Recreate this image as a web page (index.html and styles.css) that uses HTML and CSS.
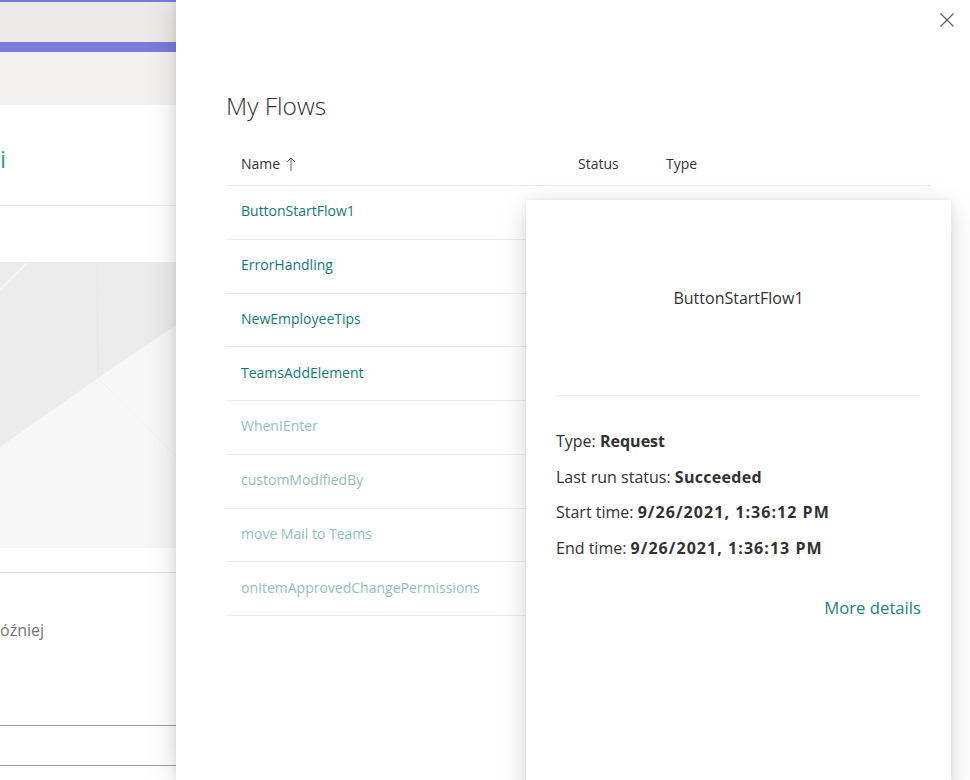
FILE: index.html
```html
<!DOCTYPE html>
<html lang="en">
<head>
<meta charset="utf-8">
<title>My Flows</title>
<link rel="stylesheet" href="styles.css">
</head>
<body>
<div class="page">
  <div class="suite-line"></div>
  <div class="suite-bar"></div>
  <div class="accent-bar"></div>
  <div class="nav-bar"></div>
  <div class="site-head"><span class="site-title">i</span></div>
  <div class="band"></div>
  <div class="hero">
    <svg class="hero-art" width="970" height="286" viewBox="0 0 970 286" preserveAspectRatio="none">
      <rect x="0" y="0" width="970" height="286" fill="#f7f7f7"/>
      <polygon points="0,0 176,0 176,63 98,116 0,185" fill="#ececec"/>
      <line x1="97" y1="0" x2="98" y2="116" stroke="#e6e6e6" stroke-width="1"/>
      <line x1="98" y1="116" x2="176" y2="195" stroke="#f0f0f0" stroke-width="1"/>
      <line x1="0" y1="28" x2="28" y2="0" stroke="#f4f4f4" stroke-width="2"/>
    </svg>
  </div>
  <div class="hero-gap"></div>
  <div class="notice"><p class="notice-text">óźniej</p></div>
  <div class="field"></div>
  <div class="field"></div>
</div>

<aside class="panel">
  <div class="panel-top">
    <button class="close" aria-label="Close">
      <svg width="14" height="14" viewBox="0 0 14 14"><path d="M0.5 0.5 L13.5 13.5 M13.5 0.5 L0.5 13.5" stroke="#605e5c" stroke-width="1.2" fill="none"/></svg>
    </button>
  </div>
  <h1 class="panel-title">My Flows</h1>
  <div class="flows">
    <div class="flows-head">
      <div class="col-name">Name
        <svg class="sort" width="10" height="14" viewBox="0 0 10 14"><path d="M5 1 V14 M1 5 L5 1 L9 5" stroke="#605e5c" stroke-width="1" fill="none"/></svg>
      </div>
      <div class="col-status">Status</div>
      <div class="col-type">Type</div>
    </div>
    <div class="flow-row"><span class="flow-name">ButtonStartFlow1</span></div>
    <div class="flow-row"><span class="flow-name">ErrorHandling</span></div>
    <div class="flow-row"><span class="flow-name">NewEmployeeTips</span></div>
    <div class="flow-row"><span class="flow-name">TeamsAddElement</span></div>
    <div class="flow-row"><span class="flow-name muted">WhenIEnter</span></div>
    <div class="flow-row"><span class="flow-name muted">customModifiedBy</span></div>
    <div class="flow-row"><span class="flow-name muted">move Mail to Teams</span></div>
    <div class="flow-row"><span class="flow-name muted">onItemApprovedChangePermissions</span></div>
  </div>

  <div class="callout">
    <div class="callout-head">ButtonStartFlow1</div>
    <div class="callout-divider"></div>
    <div class="callout-body">
      <p class="detail">Type: <b>Request</b></p>
      <p class="detail">Last run status: <b class="wide">Succeeded</b></p>
      <p class="detail">Start time: <b class="date">9/26/2021, 1:36:12 PM</b></p>
      <p class="detail">End time: <b class="date">9/26/2021, 1:36:13 PM</b></p>
      <div class="more"><a class="more-link">More details</a></div>
    </div>
  </div>
</aside>
</body>
</html>
```

FILE: styles.css
```css
* { box-sizing: border-box; }

html, body {
  margin: 0;
  padding: 0;
}

body {
  width: 970px;
  height: 780px;
  overflow: hidden;
  position: relative;
  background: #fff;
  font-family: "Open Sans", "Noto Sans", sans-serif;
  color: #323130;
}

/* background SharePoint page */
.page {
  width: 970px;
}

.suite-line { height: 2px; background: #7b79dc; }
.suite-bar { height: 40px; background: #ebeae9; }
.accent-bar { height: 10px; background: #7b7bdb; }
.nav-bar { height: 53px; background: #f3f2f1; }

.site-head {
  height: 101px;
  display: flex;
  align-items: center;
  padding-top: 6px;
  border-bottom: 1px solid #edebe9;
}

.site-title {
  margin-left: 0;
  font-size: 24px;
  color: #2a9aa0;
}

.band { height: 56px; }

.hero { height: 286px; }
.hero-art { display: block; }

.hero-gap {
  height: 25px;
  border-bottom: 1px solid #e1dfdd;
}

.notice {
  height: 153px;
  border-bottom: 1px solid #a19f9d;
  padding-top: 46px;
}

.notice-text {
  margin: 0;
  font-size: 16px;
  color: #77736f;
}

.field {
  height: 40px;
  border-bottom: 1px solid #a19f9d;
}

/* side panel */
.panel {
  position: absolute;
  top: 0;
  left: 176px;
  right: 0;
  bottom: 0;
  background: #fff;
  padding: 0 39px 0 50px;
  box-shadow: 0 0 30px rgba(0, 0, 0, 0.16), 0 0 8px rgba(0, 0, 0, 0.08);
}

.panel-top {
  display: flex;
  justify-content: flex-end;
  padding-top: 4px;
  margin-right: -32px;
}

.close {
  width: 32px;
  height: 32px;
  border: 0;
  background: transparent;
  padding: 0;
  display: flex;
  align-items: center;
  justify-content: center;
}

.panel-title {
  margin: 54px 0 0 0;
  font-size: 24.5px;
  line-height: 32px;
  font-weight: 300;
  color: #323130;
}

.flows { margin-top: 21px; }

.flows-head {
  display: grid;
  grid-template-columns: 352px 88px 1fr;
  align-items: center;
  height: 43px;
  padding-bottom: 2px;
  border-bottom: 1px solid #edebe9;
  font-size: 14px;
  color: #323130;
}

.col-name {
  padding-left: 15px;
  display: flex;
  align-items: center;
  gap: 6px;
}

.sort { margin-top: 1px; }

.flow-row {
  height: 53.75px;
  display: flex;
  align-items: center;
  padding-left: 15px;
  padding-bottom: 3px;
  border-bottom: 1px solid #edebe9;
  font-size: 14px;
}

.flow-name { color: #0f7a7c; }
.flow-name.muted { color: #8fbfbf; }

/* callout card */
.callout {
  position: absolute;
  left: 350px;
  top: 200px;
  width: 425px;
  bottom: -20px;
  background: #fff;
  box-shadow: 0 6px 26px rgba(0, 0, 0, 0.16), 0 0 6px rgba(0, 0, 0, 0.06);
}

.callout-head {
  height: 195px;
  display: flex;
  align-items: center;
  justify-content: center;
  font-size: 16px;
  color: #323130;
}

.callout-divider {
  margin: 0 31px 0 30px;
  border-top: 1px solid #edebe9;
}

.callout-body {
  padding: 28px 30px 0 30px;
}

.detail {
  margin: 0;
  font-size: 16px;
  line-height: 35.7px;
  color: #323130;
}

.detail b { font-weight: 700; }
.detail b.wide { letter-spacing: 0.3px; }
.detail b.date { letter-spacing: 1.05px; }

.more {
  margin-top: 23px;
  text-align: right;
  line-height: 36px;
}

.more-link {
  font-size: 16.7px;
  color: #1f8183;
}
```
